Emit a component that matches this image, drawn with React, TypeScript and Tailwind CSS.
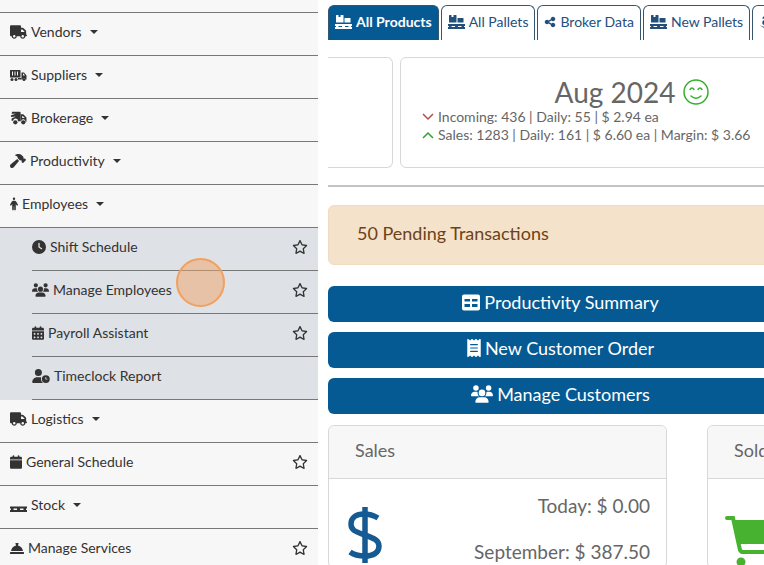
import type { ReactNode } from 'react';
import {
  FaAmazon,
  FaCalendar,
  FaCalendarDays,
  FaClock,
  FaHammer,
  FaPerson,
  FaReceipt,
  FaRegStar,
  FaShareNodes,
  FaTruck,
  FaUserClock,
  FaUsers,
} from 'react-icons/fa6';

type NavItem = {
  label: string;
  icon: ReactNode;
  dropdown?: boolean;
  starred?: boolean;
  children?: NavItem[];
};

function ContainerTruckIcon() {
  return (
    <svg viewBox="0 0 34 26" className="h-[13px] w-[17px]" fill="currentColor" aria-hidden="true">
      <path
        fillRule="evenodd"
        d="M1 2h19a1 1 0 0 1 1 1v14H0V3a1 1 0 0 1 1-1Zm3 3v8h2V5H4Zm5 0v8h2V5H9Zm5 0v8h2V5h-2Z"
      />
      <path fillRule="evenodd" d="M23 7h5l5 6v8h-2a3 3 0 0 0-6 0h-2V7Zm3 2v4h4l-3-4h-1Z" />
      <circle cx="4" cy="21" r="3" />
      <circle cx="12" cy="21" r="3" />
      <circle cx="28" cy="21" r="3" />
      <path d="M16 18h7v3h-7z" />
    </svg>
  );
}

function BrokerTruckIcon() {
  return (
    <svg viewBox="0 0 32 26" className="h-3.5 w-[17px]" fill="currentColor" aria-hidden="true">
      <path d="M4 1h14a2 2 0 0 1 2 2v16h-5a4 4 0 0 0-9-1H3v-4l8-4-9 1V8l9-3-8 0Z" />
      <path fillRule="evenodd" d="M20 6h5l6 6v8h-2a4 4 0 0 0-8-1h-1V6Zm3 3v4h5l-4-4h-1Z" />
      <circle cx="10" cy="21" r="4" />
      <circle cx="25" cy="21" r="4" />
    </svg>
  );
}

function PalletIcon() {
  return (
    <svg viewBox="0 0 34 26" className="h-[13px] w-[17px]" fill="currentColor" aria-hidden="true">
      <path
        fillRule="evenodd"
        d="M0 15h34v4h-2v3h2v4H0v-4h2v-3H0v-4Zm7 4v3h7v-3H7Zm13 0v3h7v-3h-7Z"
      />
    </svg>
  );
}

function PalletBoxesIcon() {
  return (
    <svg viewBox="0 0 34 28" className="h-3.5 w-[17px]" fill="currentColor" aria-hidden="true">
      <path d="M3 0h4v4h4V0h5a1 1 0 0 1 1 1v14H2V1a1 1 0 0 1 1-1Z" />
      <path d="M20 6h10a1 1 0 0 1 1 1v8H19V7a1 1 0 0 1 1-1Z" />
      <path
        fillRule="evenodd"
        d="M0 18h34v4h-2v2h2v4H0v-4h2v-2H0v-4Zm7 4v2h7v-2H7Zm13 0v2h7v-2h-7Z"
      />
    </svg>
  );
}

function BellIcon() {
  return (
    <svg viewBox="0 0 28 26" className="h-[13px] w-3.5" fill="currentColor" aria-hidden="true">
      <path d="M11 2h6v3h-1v2c5 1 9 5 10 11H2C3 12 7 8 12 7V5h-1Z" />
      <rect y="20" width="28" height="4" rx="1" />
    </svg>
  );
}

function TableIcon() {
  return (
    <svg viewBox="0 0 36 34" className="h-[17px] w-[18px]" fill="currentColor" aria-hidden="true">
      <path
        fillRule="evenodd"
        d="M4 1h28a4 4 0 0 1 4 4v24a4 4 0 0 1-4 4H4a4 4 0 0 1-4-4V5a4 4 0 0 1 4-4Zm1 9v5h11v-5H5Zm15 0v5h11v-5H20ZM5 20v6h11v-6H5Zm15 0v6h11v-6H20Z"
      />
    </svg>
  );
}

function SmileIcon() {
  return (
    <svg
      viewBox="0 0 26 26"
      className="size-[26px] text-[#35b02c]"
      fill="none"
      stroke="currentColor"
      strokeWidth="1.5"
      strokeLinecap="round"
      aria-hidden="true"
    >
      <circle cx="13" cy="13" r="12" />
      <path d="M7 10.5q2-3 4 0M15 10.5q2-3 4 0M8 17q5 4.500 10 0" />
    </svg>
  );
}

function DollarIcon() {
  return (
    <svg
      viewBox="0 0 36 56"
      className="h-14 w-9 text-[#155a92]"
      fill="none"
      stroke="currentColor"
      strokeWidth="5.5"
      aria-hidden="true"
    >
      <path d="M18 0v56" />
      <path d="M31 11C26 8 21 7 17 7 9 7 4 11 4 17c0 7 6 8 14 11s14 5 14 11c0 7-6 10-14 10-6 0-11-1-15-4" />
    </svg>
  );
}

function CartIcon() {
  return (
    <svg viewBox="0 0 60 52" className="h-[52px] w-[60px] shrink-0 text-[#46b230]" aria-hidden="true">
      <path d="M9 5h51l-6 24H15Z" fill="currentColor" />
      <path
        d="M3 3h6l7 32q1 2 3 2h34"
        fill="none"
        stroke="currentColor"
        strokeWidth="4"
        strokeLinecap="round"
      />
      <circle cx="17" cy="47" r="4.500" fill="currentColor" />
      <circle cx="48" cy="47" r="4.500" fill="currentColor" />
    </svg>
  );
}

function Chevron({ up }: { up?: boolean }) {
  return (
    <svg viewBox="0 0 12 8" className="h-2 w-3" fill="none" stroke="currentColor" strokeWidth="1.5" aria-hidden="true">
      <path d={up ? 'M1 7l5-5 5 5' : 'M1 1l5 5 5-5'} />
    </svg>
  );
}

function Caret() {
  return (
    <svg viewBox="0 0 8 4" className="ml-1 h-1 w-2" fill="currentColor" aria-hidden="true">
      <path d="M0 0h8L4 4Z" />
    </svg>
  );
}

const navItems: NavItem[] = [
  { label: 'Vendors', icon: <FaTruck className="h-3.5 w-[17px]" />, dropdown: true },
  { label: 'Suppliers', icon: <ContainerTruckIcon />, dropdown: true },
  { label: 'Brokerage', icon: <BrokerTruckIcon />, dropdown: true },
  { label: 'Productivity', icon: <FaHammer className="size-4" />, dropdown: true },
  {
    label: 'Employees',
    icon: <FaPerson className="h-3.5 w-2" />,
    dropdown: true,
    children: [
      { label: 'Shift Schedule', icon: <FaClock className="size-3.5" />, starred: true },
      { label: 'Manage Employees', icon: <FaUsers className="h-4 w-[17px]" />, starred: true },
      { label: 'Payroll Assistant', icon: <FaCalendarDays className="h-3.5 w-3" />, starred: true },
      { label: 'Timeclock Report', icon: <FaUserClock className="h-3.5 w-[18px]" /> },
    ],
  },
  { label: 'Logistics', icon: <FaTruck className="h-3.5 w-[17px]" />, dropdown: true },
  { label: 'General Schedule', icon: <FaCalendar className="h-3.5 w-3" />, starred: true },
  { label: 'Stock', icon: <PalletIcon />, dropdown: true },
  { label: 'Manage Services', icon: <BellIcon />, starred: true },
];

const tabs = [
  { label: 'All Products', icon: <PalletBoxesIcon />, active: true },
  { label: 'All Pallets', icon: <PalletBoxesIcon /> },
  { label: 'Broker Data', icon: <FaShareNodes className="size-3" /> },
  { label: 'New Pallets', icon: <PalletBoxesIcon /> },
];

const actions = [
  { label: 'Productivity Summary', icon: <TableIcon /> },
  { label: 'New Customer Order', icon: <FaReceipt className="h-[18px] w-3.5" /> },
  { label: 'Manage Customers', icon: <FaUsers className="h-5 w-[22px]" /> },
];

function NavRow({ item, nested }: { item: NavItem; nested?: boolean }) {
  return (
    <div
      className={
        nested
          ? 'flex h-[43px] items-center justify-between border-b border-[#777] pr-2.5 pb-1'
          : 'flex h-[43px] items-center justify-between border-b border-[#777] pr-2.5 pb-1 pl-2.5'
      }
    >
      <a href="#" className="flex items-center gap-1">
        {item.icon}
        <span>{item.label}</span>
        {item.dropdown && <Caret />}
      </a>
      {item.starred && (
        <button aria-label={`Add ${item.label} to favorites`}>
          <FaRegStar className="h-3.5 w-4" />
        </button>
      )}
    </div>
  );
}

function Sidebar() {
  return (
    <nav className="relative w-[318px] shrink-0 bg-[#f7f7f7] text-sm text-[#333]">
      <div className="h-[13px] border-b border-[#777]" />
      <ul>
        {navItems.map((item) => (
          <li key={item.label}>
            <NavRow item={item} />
            {item.children && (
              <ul className="bg-[#dee1e5] pl-8">
                {item.children.map((child) => (
                  <li key={child.label}>
                    <NavRow item={child} nested />
                  </li>
                ))}
              </ul>
            )}
          </li>
        ))}
      </ul>

      {/* Click marker */}
      <div className="pointer-events-none absolute top-[258px] left-[176px] size-[49px] rounded-full border-2 border-[#f0a05f] bg-[#f0a468]/50" />
    </nav>
  );
}

export default function App() {
  return (
    <div className="flex h-screen overflow-hidden bg-white font-['Lato',sans-serif]">
      <Sidebar />

      <main className="min-w-0 flex-1 overflow-hidden pl-2.5">
        <div className="min-w-[465px]">
          {/* Tabs */}
          <div className="flex gap-0.5 pt-[5px] text-sm">
            {tabs.map((tab) => (
              <button
                key={tab.label}
                className={
                  tab.active
                    ? 'flex h-[35px] shrink-0 items-center gap-1 rounded-t-md border border-b-0 border-[#34566f] bg-[#055a94] px-1.5 pb-0.5 font-bold text-white'
                    : 'flex h-[35px] shrink-0 items-center gap-1 rounded-t-md border border-b-0 border-[#34566f] px-1.5 pb-0.5 text-[#234f7d]'
                }
              >
                {tab.icon}
                {tab.label}
              </button>
            ))}
            <button
              aria-label="Amazon"
              className="flex h-[35px] w-24 shrink-0 items-center rounded-t-md border border-b-0 border-[#34566f] px-1.5 pb-0.5 text-[#234f7d]"
            >
              <FaAmazon className="size-3.5" />
            </button>
          </div>

          {/* Monthly summary */}
          <div className="mt-[17px] flex gap-[7px] text-[#666]">
            <div className="h-[111px] w-[65px] shrink-0 rounded-r-md border border-l-0 border-[#d8d8d8]" />
            <section className="h-[111px] w-[464px] shrink-0 rounded-md border border-[#d8d8d8] px-[21px] pt-[18px]">
              <h2 className="flex items-center justify-center gap-2 text-[28px] leading-8">
                Aug 2024 <SmileIcon />
              </h2>
              <p className="flex items-center gap-1 text-sm leading-[18px]">
                <span className="text-[#b84a4a]">
                  <Chevron />
                </span>
                Incoming: 436 | Daily: 55 | $ 2.94 ea
              </p>
              <p className="flex items-center gap-1 text-sm leading-[18px]">
                <span className="text-[#35a02c]">
                  <Chevron up />
                </span>
                Sales: 1283 | Daily: 161 | $ 6.60 ea | Margin: $ 3.66
              </p>
            </section>
          </div>

          <hr className="mt-[17px] border-t-2 border-[#c3c3c3]" />

          {/* Alert */}
          <div className="mt-[18px] flex h-[60px] items-center rounded-md border border-[#efdcc3] bg-[#f4e2cb] px-7 pb-1 text-lg text-[#6d4217]">
            50 Pending Transactions
          </div>

          <div className="mt-[21px] flex flex-col gap-2.5">
            {actions.map((action) => (
              <button
                key={action.label}
                className="flex h-9 items-center justify-center gap-1 rounded-md bg-[#055a94] pb-1 text-lg text-white"
              >
                {action.icon}
                {action.label}
              </button>
            ))}
          </div>

          {/* Stat cards */}
          <div className="mt-[11px] flex gap-10 text-lg text-[#666]">
            <section className="w-[339px] shrink-0 rounded-md border border-[#d8d8d8]">
              <h3 className="flex h-[53px] items-center rounded-t-md border-b border-[#d8d8d8] bg-[#f7f7f7] px-[26px] pb-1">
                Sales
              </h3>
              <div className="flex justify-between px-4 pt-3.5">
                <div className="pt-3.5 pl-0.5">
                  <DollarIcon />
                </div>
                <div className="text-right text-[19px] leading-[26px]">
                  <p>Today: $ 0.00</p>
                  <p className="mt-5">September: $ 387.50</p>
                </div>
              </div>
            </section>
            <section className="w-[339px] shrink-0 rounded-md border border-[#d8d8d8]">
              <h3 className="flex h-[53px] items-center rounded-t-md border-b border-[#d8d8d8] bg-[#f7f7f7] px-[26px] pb-1">
                Sold
              </h3>
              <div className="px-4 pt-9">
                <CartIcon />
              </div>
            </section>
          </div>
        </div>
      </main>
    </div>
  );
}
